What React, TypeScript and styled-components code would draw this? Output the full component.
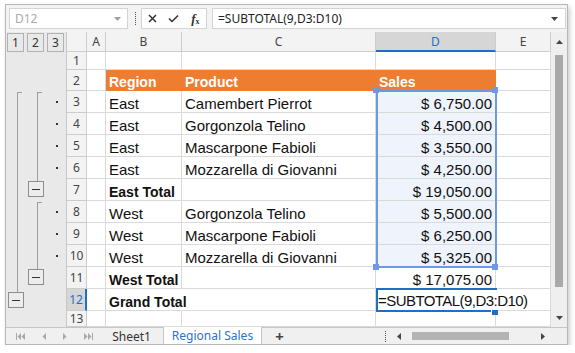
import React from "react";
import styled, { createGlobalStyle } from "styled-components";

const UI = `"Noto Sans", "Open Sans", "DejaVu Sans", sans-serif`;
const SHEET = `"Liberation Sans", Arial, sans-serif`;

const GRID_LINE = "#dadada";
const HEAD_LINE = "#cdcdcd";
const HEAD_BG = "#f3f3f3";
const ORANGE = "#ed7d31";
const BLUE = "#1f6fc4";
const RANGE = "#6d98e6";

const GlobalStyle = createGlobalStyle`
  html, body { margin: 0; padding: 0; background: #fff; }
  body { font-family: ${UI}; }
`;

interface Row {
  b?: string;
  c?: string;
  d?: string;
  bold?: boolean;
  head?: boolean;
  spill?: boolean; // text runs on into the empty cell to the right
}

const ROWS: Row[] = [
  {},
  { b: "Region", c: "Product", d: "Sales", head: true },
  { b: "East", c: "Camembert Pierrot", d: "$ 6,750.00" },
  { b: "East", c: "Gorgonzola Telino", d: "$ 4,500.00" },
  { b: "East", c: "Mascarpone Fabioli", d: "$ 3,550.00" },
  { b: "East", c: "Mozzarella di Giovanni", d: "$ 4,250.00" },
  { b: "East Total", d: "$ 19,050.00", bold: true },
  { b: "West", c: "Gorgonzola Telino", d: "$ 5,500.00" },
  { b: "West", c: "Mascarpone Fabioli", d: "$ 6,250.00" },
  { b: "West", c: "Mozzarella di Giovanni", d: "$ 5,325.00" },
  { b: "West Total", d: "$ 17,075.00", bold: true },
  { b: "Grand Total", bold: true, spill: true },
  {},
];

const COLUMNS = ["A", "B", "C", "D", "E"];

// small triangle used by dropdowns and scroll arrows
const Caret: React.FC<{ dir: "up" | "down" | "left" | "right"; color?: string; w?: number; h?: number }> = ({
  dir,
  color = "#444",
  w = 7,
  h = 4,
}) => {
  const vertical = dir === "up" || dir === "down";
  const width = vertical ? w : h;
  const height = vertical ? h : w;
  const pts =
    dir === "down"
      ? `0,0 ${w},0 ${w / 2},${h}`
      : dir === "up"
      ? `0,${h} ${w},${h} ${w / 2},0`
      : dir === "left"
      ? `${h},0 ${h},${w} 0,${w / 2}`
      : `0,0 0,${w} ${h},${w / 2}`;
  return (
    <svg width={width} height={height} viewBox={`0 0 ${width} ${height}`}>
      <polygon points={pts} fill={color} />
    </svg>
  );
};

const NavIcon: React.FC<{ kind: "first" | "prev" | "next" | "last" }> = ({ kind }) => {
  const c = "#a9a9a9";
  return (
    <svg width="9" height="7" viewBox="0 0 9 7">
      <g fill={c} transform={kind === "next" || kind === "last" ? "translate(9,0) scale(-1,1)" : undefined}>
        {kind === "first" || kind === "last" ? (
          <>
            <rect x="0" y="0" width="1" height="7" />
            <polygon points="5,0 5,7 1.5,3.5" />
            <polygon points="9,0 9,7 5.5,3.5" />
          </>
        ) : (
          <polygon points="7,0 7,7 3.5,3.5" />
        )}
      </g>
    </svg>
  );
};

const Page = styled.div`
  padding: 4px 0 0 5px;
`;

const Window = styled.div`
  width: 563px;
  height: 341px;
  box-sizing: border-box;
  border: 1px solid #b7b7b7;
  box-shadow: 2px 3px 5px rgba(0, 0, 0, 0.2);
  display: flex;
  flex-direction: column;
  overflow: hidden;
  background: #fff;
`;

const FormulaBar = styled.div`
  height: 27px;
  flex: none;
  display: flex;
  align-items: center;
  padding: 0 1px 0 3px;
  box-sizing: border-box;
  background: #f3f3f3;
  font-family: ${UI};
  font-size: 12px;
`;

const NameBox = styled.div`
  width: 119px;
  height: 21px;
  box-sizing: border-box;
  border: 1px solid #d4d4d4;
  background: #fff;
  color: #a9a9a9;
  display: flex;
  align-items: center;
  justify-content: space-between;
  padding: 0 6px 0 5px;
`;

const Grip = styled.div`
  width: 0;
  height: 13px;
  border-left: 1px dotted #555;
  margin: 0 5px 0 7px;
`;

const ButtonGroup = styled.div`
  width: 66px;
  height: 21px;
  box-sizing: border-box;
  border: 1px solid #d4d4d4;
  background: #fff;
  display: flex;
`;

const BarButton = styled.div`
  flex: 1;
  display: flex;
  align-items: center;
  justify-content: center;
  color: #333;
`;

const Fx = styled.span`
  font-family: "Liberation Serif", serif;
  font-style: italic;
  font-weight: 700;
  font-size: 13px;
  color: #333;
  sub {
    font-size: 8px;
    font-style: normal;
    vertical-align: -1px;
  }
`;

const FormulaInput = styled.div`
  flex: 1;
  height: 21px;
  margin-left: 5px;
  box-sizing: border-box;
  border: 1px solid #d4d4d4;
  background: #fff;
  color: #222;
  display: flex;
  align-items: center;
  justify-content: space-between;
  padding: 0 7px 0 5px;
`;

const Body = styled.div`
  flex: 1;
  display: flex;
  min-height: 0;
`;

const OutlinePane = styled.div`
  width: 61px;
  flex: none;
  box-sizing: border-box;
  border-right: 1px solid #c8c8c8;
  background: #e9e9e9;
  display: flex;
  flex-direction: column;
`;

const LevelBar = styled.div`
  height: 20px;
  flex: none;
  display: flex;
  gap: 3px;
  padding: 1px 0 0 1px;
  box-sizing: border-box;
`;

const LevelButton = styled.div`
  width: 17px;
  height: 19px;
  box-sizing: border-box;
  border: 1px solid #b1b1b1;
  display: flex;
  align-items: center;
  justify-content: center;
  font-family: ${UI};
  font-size: 12px;
  color: #333;
`;

const OutlineCanvas = styled.svg`
  display: block;
`;

const Sheet = styled.div`
  position: relative;
  width: 484px;
  flex: none;
  display: grid;
  grid-template-columns: 20px 19px 76px 194px 120px 55px;
  grid-template-rows: 20px 18px 21px repeat(10, 22px) 16px;
  overflow: hidden;
  background: #fff;
`;

const HeadCell = styled.div<{ $active?: boolean; $row?: boolean }>`
  box-sizing: border-box;
  border-right: 1px solid ${HEAD_LINE};
  border-bottom: 1px solid ${HEAD_LINE};
  background: ${(p) => (p.$active ? "#d6d6d6" : HEAD_BG)};
  color: ${(p) => (p.$active ? BLUE : "#444")};
  display: flex;
  align-items: center;
  justify-content: center;
  font-family: ${UI};
  font-size: 12px;
  ${(p) => p.$active && (p.$row ? `border-right: 2px solid ${BLUE};` : `border-bottom: 2px solid ${BLUE};`)}
`;

const Cell = styled.div<{
  $orange?: boolean;
  $sel?: boolean;
  $bold?: boolean;
  $right?: boolean;
  $flow?: boolean;
}>`
  box-sizing: border-box;
  min-width: 0;
  border-right: 1px solid ${(p) => (p.$orange ? ORANGE : GRID_LINE)};
  border-bottom: 1px solid ${(p) => (p.$orange ? ORANGE : GRID_LINE)};
  background: ${(p) => (p.$orange ? ORANGE : p.$sel ? "#eef3fc" : "transparent")};
  color: ${(p) => (p.$orange ? "#fff" : "#111")};
  font-family: ${SHEET};
  font-size: ${(p) => (p.$bold ? 14 : 15)}px;
  font-weight: ${(p) => (p.$bold ? 700 : 400)};
  text-align: ${(p) => (p.$right ? "right" : "left")};
  line-height: 18px;
  padding: ${(p) => (p.$orange ? 3 : 4)}px 3px 0;
  white-space: nowrap;
  overflow: ${(p) => (p.$flow ? "visible" : "hidden")};
  ${(p) => p.$flow && "border-right-color: transparent; position: relative; z-index: 1;"}
`;

const RangeBox = styled.div`
  position: absolute;
  left: 309px;
  top: 58px;
  width: 121px;
  height: 178px;
  box-sizing: border-box;
  border: 2px solid ${RANGE};
  pointer-events: none;
`;

const Handle = styled.div<{ $x: number; $y: number }>`
  position: absolute;
  left: ${(p) => p.$x}px;
  top: ${(p) => p.$y}px;
  width: 6px;
  height: 6px;
  background: ${RANGE};
`;

const ActiveBox = styled.div`
  position: absolute;
  left: 309px;
  top: 256px;
  width: 121px;
  height: 24px;
  box-sizing: border-box;
  border: 2px solid ${BLUE};
`;

const Editor = styled.div`
  position: absolute;
  left: 311px;
  top: 258px;
  width: 147px;
  height: 20px;
  box-sizing: border-box;
  padding-top: 1px;
  background: #fff;
  font-family: ${SHEET};
  font-size: 15px;
  letter-spacing: -0.55px;
  line-height: 19px;
  color: #111;
  white-space: nowrap;
`;

const FillHandle = styled.div`
  position: absolute;
  left: 425px;
  top: 278px;
  width: 6px;
  height: 5px;
  background: ${BLUE};
  box-shadow: -1px 0 0 #fff;
`;

const VScroll = styled.div`
  width: 16px;
  flex: none;
  background: #efefef;
  display: flex;
  flex-direction: column;
  align-items: center;
`;

const ArrowBox = styled.div<{ $h: number }>`
  height: ${(p) => p.$h}px;
  width: 100%;
  flex: none;
  display: flex;
  align-items: center;
  justify-content: center;
`;

const VThumb = styled.div`
  width: 8px;
  height: 232px;
  margin-top: 3px;
  background: #a9a9a9;
`;

const Spacer = styled.div`
  flex: 1;
`;

const TabBar = styled.div`
  height: 17px;
  flex: none;
  display: flex;
  box-sizing: border-box;
  border-top: 1px solid #c6c6c6;
  background: #f0f0f0;
  font-family: ${UI};
  font-size: 12px;
`;

const TabNav = styled.div`
  width: 94px;
  flex: none;
  display: flex;
  padding-left: 3px;
  box-sizing: border-box;
`;

const NavSlot = styled.div`
  width: 23px;
  display: flex;
  align-items: center;
  justify-content: center;
`;

const Tab = styled.div<{ $active?: boolean; $w: number }>`
  width: ${(p) => p.$w}px;
  flex: none;
  box-sizing: border-box;
  display: flex;
  align-items: center;
  justify-content: center;
  color: ${(p) => (p.$active ? "#2e72cc" : "#333")};
  background: ${(p) => (p.$active ? "#fff" : "transparent")};
  border-right: 1px solid #c6c6c6;
  ${(p) => p.$active && "margin-top: -1px; height: 17px;"}
`;

const AddTab = styled.div`
  width: 35px;
  flex: none;
  display: flex;
  align-items: center;
  justify-content: center;
  font-size: 15px;
  font-weight: 700;
  color: #444;
`;

const HScroll = styled.div`
  width: 170px;
  flex: none;
  display: flex;
  align-items: center;
  padding-left: 4px;
  box-sizing: border-box;
`;

const TabGrip = styled.div`
  width: 0;
  height: 11px;
  border-left: 1px dotted #555;
`;

const HArrow = styled.div<{ $w: number }>`
  width: ${(p) => p.$w}px;
  flex: none;
  display: flex;
  align-items: center;
  justify-content: center;
`;

const HThumb = styled.div`
  width: 97px;
  height: 8px;
  background: #b3b3b3;
`;

const Corner = styled.div`
  width: 16px;
  flex: none;
  background: #efefef;
`;

const Outline: React.FC = () => (
  <OutlineCanvas width="60" height="275">
    <g stroke="#9d9d9d" fill="none" shapeRendering="crispEdges">
      <path d="M16 40.5H11.5V240" />
      <path d="M36 40.5H31.5V129" />
      <path d="M36 150.5H31.5V217" />
    </g>
    {[50, 72, 94, 116, 160, 182, 204].map((y) => (
      <rect key={y} x={50} y={y - 1} width={2} height={2} fill="#333" />
    ))}
    {[
      [2, 240],
      [22, 129],
      [22, 217],
    ].map(([x, y]) => (
      <g key={`${x}-${y}`} shapeRendering="crispEdges">
        <rect x={x + 0.5} y={y + 0.5} width={15} height={15} fill="#ececec" stroke="#8e8e8e" />
        <path d={`M${x + 4} ${y + 8.5}h8`} stroke="#333" />
      </g>
    ))}
  </OutlineCanvas>
);

const App: React.FC = () => {
  return (
    <Page>
      <GlobalStyle />
      <Window>
        <FormulaBar>
          <NameBox>
            <span>D12</span>
            <Caret dir="down" color="#a0a0a0" />
          </NameBox>
          <Grip />
          <ButtonGroup>
            <BarButton>
              <svg width="9" height="9" viewBox="0 0 9 9">
                <path d="M1 1L8 8M8 1L1 8" stroke="#333" strokeWidth="1.5" />
              </svg>
            </BarButton>
            <BarButton>
              <svg width="11" height="9" viewBox="0 0 11 9">
                <path d="M1 4.5L4 7.5L10 1.5" stroke="#333" strokeWidth="1.5" fill="none" />
              </svg>
            </BarButton>
            <BarButton>
              <Fx>
                f<sub>x</sub>
              </Fx>
            </BarButton>
          </ButtonGroup>
          <FormulaInput>
            <span>=SUBTOTAL(9,D3:D10)</span>
            <Caret dir="down" color="#444" />
          </FormulaInput>
        </FormulaBar>

        <Body>
          <OutlinePane>
            <LevelBar>
              <LevelButton>1</LevelButton>
              <LevelButton>2</LevelButton>
              <LevelButton>3</LevelButton>
            </LevelBar>
            <Outline />
          </OutlinePane>

          <Sheet>
            <HeadCell />
            {COLUMNS.map((c) => (
              <HeadCell key={c} $active={c === "D"}>
                {c}
              </HeadCell>
            ))}
            {ROWS.map((r, i) => {
              const n = i + 1;
              const orange = !!r.head;
              const sel = n >= 3 && n <= 10;
              return (
                <React.Fragment key={n}>
                  <HeadCell $active={n === 12} $row>
                    {n}
                  </HeadCell>
                  <Cell />
                  <Cell $orange={orange} $bold={orange || r.bold} $flow={r.spill}>
                    {r.b}
                  </Cell>
                  <Cell $orange={orange} $bold={orange}>
                    {r.c}
                  </Cell>
                  <Cell $orange={orange} $bold={orange} $sel={sel} $right={!orange}>
                    {r.d}
                  </Cell>
                  <Cell />
                </React.Fragment>
              );
            })}

            <RangeBox />
            <Handle $x={306} $y={55} />
            <Handle $x={425} $y={55} />
            <Handle $x={306} $y={232} />
            <Handle $x={425} $y={232} />
            <ActiveBox />
            <Editor>=SUBTOTAL(9,D3:D10)</Editor>
            <FillHandle />
          </Sheet>

          <VScroll>
            <ArrowBox $h={20}>
              <Caret dir="up" />
            </ArrowBox>
            <VThumb />
            <Spacer />
            <ArrowBox $h={18}>
              <Caret dir="down" />
            </ArrowBox>
          </VScroll>
        </Body>

        <TabBar>
          <TabNav>
            <NavSlot>
              <NavIcon kind="first" />
            </NavSlot>
            <NavSlot>
              <NavIcon kind="prev" />
            </NavSlot>
            <NavSlot>
              <NavIcon kind="next" />
            </NavSlot>
            <NavSlot>
              <NavIcon kind="last" />
            </NavSlot>
          </TabNav>
          <Tab $w={64}>Sheet1</Tab>
          <Tab $w={98} $active>
            Regional Sales
          </Tab>
          <AddTab>+</AddTab>
          <Spacer />
          <HScroll>
            <TabGrip />
            <HArrow $w={26}>
              <Caret dir="left" w={7} h={4} />
            </HArrow>
            <HThumb />
            <Spacer />
            <HArrow $w={16}>
              <Caret dir="right" w={7} h={4} />
            </HArrow>
          </HScroll>
          <Corner />
        </TabBar>
      </Window>
    </Page>
  );
};

export default App;
